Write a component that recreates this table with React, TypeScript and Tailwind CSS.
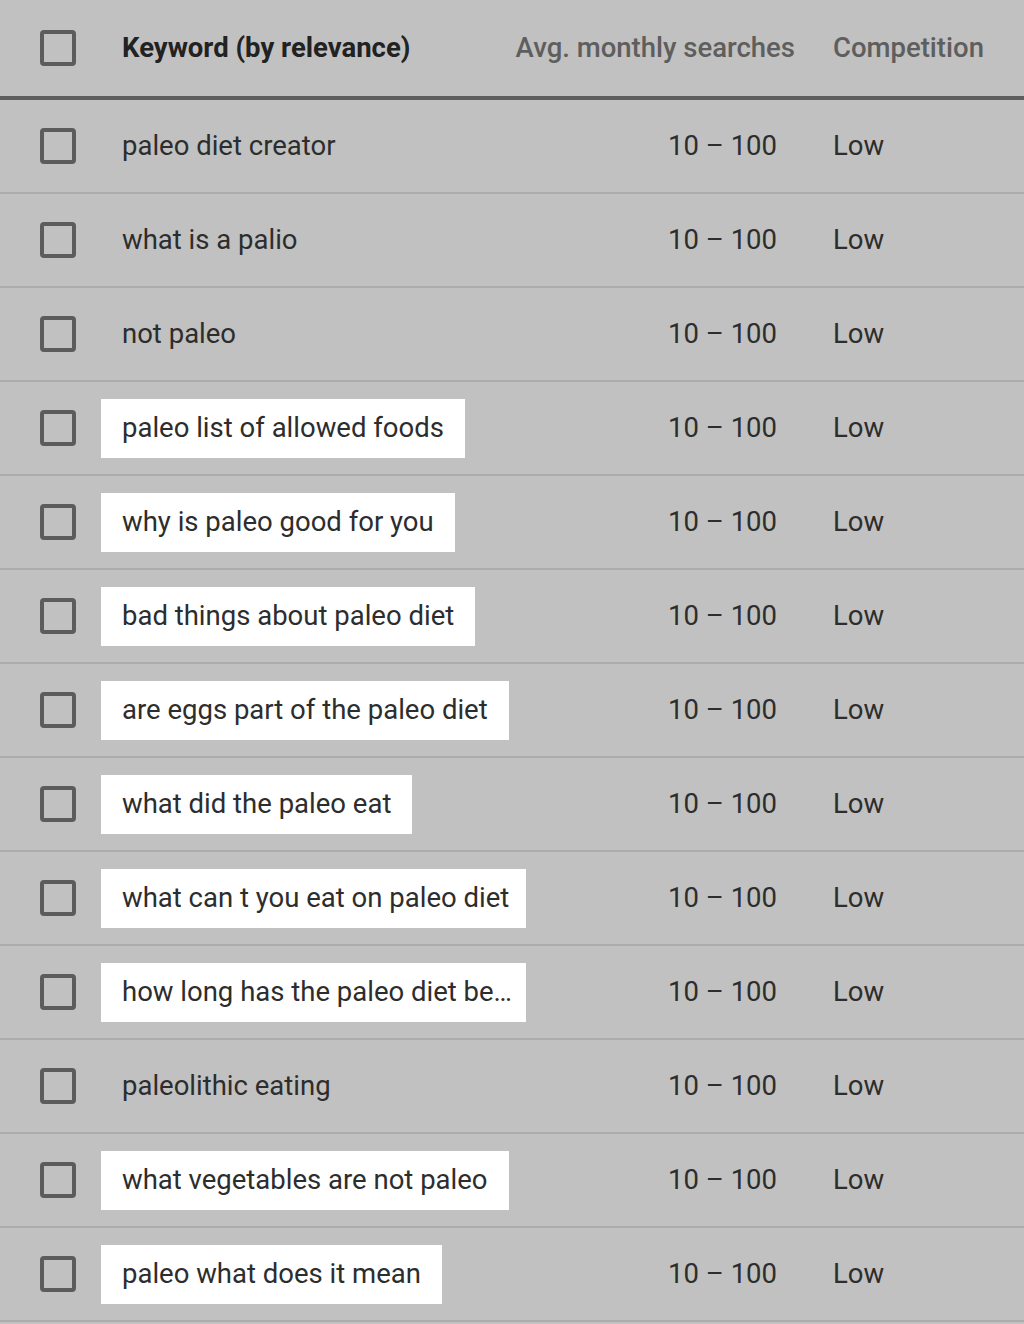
import React from "react";

type Row = { kw: string; hl: boolean };

const rows: Row[] = [
  { kw: "paleo diet creator", hl: false },
  { kw: "what is a palio", hl: false },
  { kw: "not paleo", hl: false },
  { kw: "paleo list of allowed foods", hl: true },
  { kw: "why is paleo good for you", hl: true },
  { kw: "bad things about paleo diet", hl: true },
  { kw: "are eggs part of the paleo diet", hl: true },
  { kw: "what did the paleo eat", hl: true },
  { kw: "what can t you eat on paleo diet", hl: true },
  { kw: "how long has the paleo diet be…", hl: true },
  { kw: "paleolithic eating", hl: false },
  { kw: "what vegetables are not paleo", hl: true },
  { kw: "paleo what does it mean", hl: true },
];

function Box() {
  return (
    <div className="w-[36px] h-[36px] border-[4px] border-[#5c5c5c] rounded-[4px] shrink-0" />
  );
}

export default function App() {
  return (
    <div
      className="w-[1024px] h-[1324px] bg-[#c1c1c1] overflow-hidden"
      style={{ fontFamily: "Roboto, 'Liberation Sans', sans-serif" }}
    >
      <div className="flex items-center h-[100px] border-b-[4px] border-[#5e5e5e]">
        <div className="w-[101px] pl-[40px] shrink-0 flex">
          <Box />
        </div>
        <div className="flex-1 min-w-0 pl-[21px] text-[27.5px] font-bold text-[#222222] whitespace-nowrap">
          Keyword (by relevance)
        </div>
        <div className="shrink-0 text-[27.5px] font-medium text-[#5e5e5e] whitespace-nowrap">
          Avg. monthly searches
        </div>
        <div className="w-[229px] shrink-0 pl-[38px] text-[27.5px] font-medium text-[#5e5e5e] whitespace-nowrap">
          Competition
        </div>
      </div>
      {rows.map((r, i) => (
        <div
          key={i}
          className="flex items-center h-[94px] border-b-2 border-[#acacac]"
        >
          <div className="w-[101px] pl-[40px] shrink-0 flex">
            <Box />
          </div>
          <div className="w-[425px] shrink-0 flex">
            <div
              className={
                "h-[59px] max-w-[425px] overflow-hidden flex items-center px-[21px] text-[27.5px] text-[#2d2d2d] whitespace-nowrap " +
                (r.hl ? "bg-white" : "")
              }
            >
              {r.kw}
            </div>
          </div>
          <div className="flex-1 flex justify-end pr-[18px] text-[27.5px] text-[#2d2d2d] whitespace-nowrap">
            10 – 100
          </div>
          <div className="w-[229px] shrink-0 pl-[38px] text-[27.5px] text-[#2d2d2d]">
            Low
          </div>
        </div>
      ))}
    </div>
  );
}
